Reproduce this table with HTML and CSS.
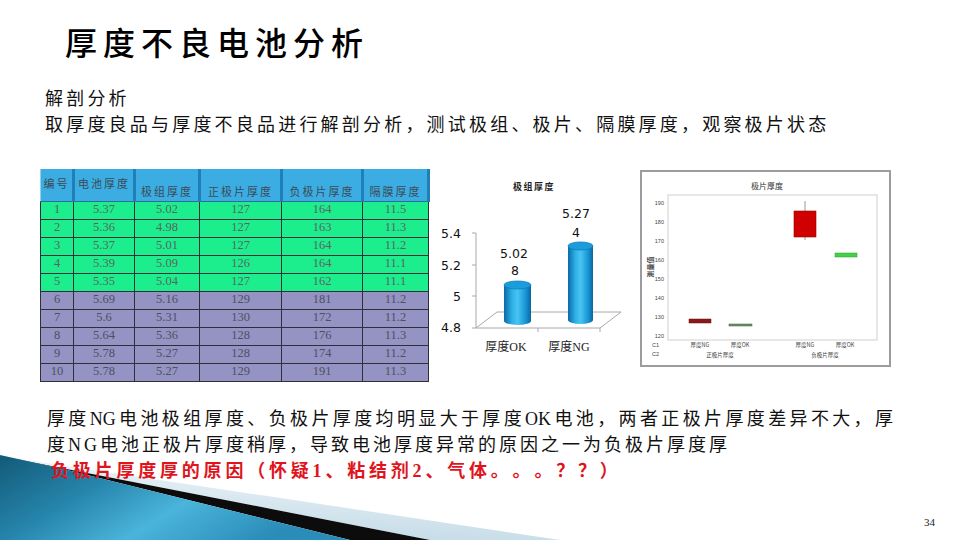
FILE: index.html
```html
<!DOCTYPE html>
<html lang="zh-CN">
<head>
<meta charset="utf-8">
<title>厚度不良电池分析</title>
<link rel="stylesheet" href="styles.css">
</head>
<body>
<div class="slide">
  <svg class="deco" viewBox="0 0 560 100" width="560" height="100">
    <defs>
      <linearGradient id="teal" x1="0" y1="0" x2="1" y2="0.4">
        <stop offset="0" stop-color="#125a78"/>
        <stop offset="0.35" stop-color="#2684ab"/>
        <stop offset="0.65" stop-color="#4ab4da"/>
        <stop offset="1" stop-color="#2a8cb8"/>
      </linearGradient>
      <linearGradient id="pale" x1="0" y1="1" x2="0.3" y2="0">
        <stop offset="0" stop-color="#bcd6e4"/>
        <stop offset="1" stop-color="#eef5f9"/>
      </linearGradient>
    </defs>
    <polygon points="0,16 560,100 430,100" fill="url(#pale)"/>
    <polygon points="0,16 430,100 350,100 63,29" fill="#0c0c0c"/>
    <polygon points="0,15 63,29 350,100 0,100" fill="url(#teal)"/>
  </svg>

  <div class="content">
    <h1 class="title">厚度不良电池分析</h1>

    <div class="intro">
      <p>解剖分析</p>
      <p>取厚度良品与厚度不良品进行解剖分析，测试极组、极片、隔膜厚度，观察极片状态</p>
    </div>

    <div class="figures">
      <table class="data">
        <colgroup>
          <col class="c1"><col class="c2"><col class="c3"><col class="c4"><col class="c5"><col class="c6">
        </colgroup>
        <thead>
          <tr>
            <th class="mid">编号</th>
            <th class="mid">电池厚度</th>
            <th>极组厚度</th>
            <th>正极片厚度</th>
            <th>负极片厚度</th>
            <th>隔膜厚度</th>
          </tr>
        </thead>
        <tbody>
          <tr class="ok"><td>1</td><td>5.37</td><td>5.02</td><td>127</td><td>164</td><td>11.5</td></tr>
          <tr class="ok"><td>2</td><td>5.36</td><td>4.98</td><td>127</td><td>163</td><td>11.3</td></tr>
          <tr class="ok"><td>3</td><td>5.37</td><td>5.01</td><td>127</td><td>164</td><td>11.2</td></tr>
          <tr class="ok"><td>4</td><td>5.39</td><td>5.09</td><td>126</td><td>164</td><td>11.1</td></tr>
          <tr class="ok"><td>5</td><td>5.35</td><td>5.04</td><td>127</td><td>162</td><td>11.1</td></tr>
          <tr class="ng"><td>6</td><td>5.69</td><td>5.16</td><td>129</td><td>181</td><td>11.2</td></tr>
          <tr class="ng"><td>7</td><td>5.6</td><td>5.31</td><td>130</td><td>172</td><td>11.2</td></tr>
          <tr class="ng"><td>8</td><td>5.64</td><td>5.36</td><td>128</td><td>176</td><td>11.3</td></tr>
          <tr class="ng"><td>9</td><td>5.78</td><td>5.27</td><td>128</td><td>174</td><td>11.2</td></tr>
          <tr class="ng"><td>10</td><td>5.78</td><td>5.27</td><td>129</td><td>191</td><td>11.3</td></tr>
        </tbody>
      </table>

      <svg class="bar-chart" viewBox="0 0 200 190" width="200" height="190">
        <defs>
          <linearGradient id="cyl" x1="0" y1="0" x2="1" y2="0">
            <stop offset="0" stop-color="#0a6aa6"/>
            <stop offset="0.3" stop-color="#2fb0e8"/>
            <stop offset="0.5" stop-color="#48c4f4"/>
            <stop offset="0.8" stop-color="#1896d4"/>
            <stop offset="1" stop-color="#0a64a0"/>
          </linearGradient>
        </defs>
        <text class="bc-title" x="102" y="20">极组厚度</text>
        <g class="bc-y">
          <text x="29" y="68">5.4</text>
          <text x="29" y="100">5.2</text>
          <text x="29" y="131">5</text>
          <text x="29" y="162">4.8</text>
        </g>
        <g class="bc-axis">
          <line x1="44" y1="63" x2="44" y2="158"/>
          <line x1="40" y1="63" x2="44" y2="63"/>
          <line x1="40" y1="95" x2="44" y2="95"/>
          <line x1="40" y1="126" x2="44" y2="126"/>
          <line x1="40" y1="158" x2="44" y2="158"/>
          <polygon points="44,158 168,158 189,142 65,142" fill="none"/>
          <line x1="106" y1="158" x2="106" y2="162"/>
          <line x1="168" y1="158" x2="168" y2="162"/>
        </g>
        <path d="M72,115 L72,151 A13.5,4 0 0 0 99,151 L99,115 Z" fill="url(#cyl)"/>
        <ellipse cx="85.5" cy="115" rx="13.5" ry="4" fill="#1b9ddb" stroke="#0d7cbd" stroke-width="0.8"/>
        <path d="M136,76 L136,150 A12.5,4 0 0 0 161,150 L161,76 Z" fill="url(#cyl)"/>
        <ellipse cx="148.5" cy="76" rx="12.5" ry="4" fill="#1b9ddb" stroke="#0d7cbd" stroke-width="0.8"/>
        <g class="bc-val">
          <text x="82" y="88">5.02</text>
          <text x="83" y="105">8</text>
          <text x="144" y="48">5.27</text>
          <text x="144" y="67">4</text>
        </g>
        <g class="bc-x">
          <text x="74" y="181">厚度OK</text>
          <text x="137" y="181">厚度NG</text>
        </g>
      </svg>

      <svg class="box-chart" viewBox="0 0 251 197" width="251" height="197">
        <rect x="1" y="1" width="249" height="195" fill="#fff" stroke="#9c9c9c" stroke-width="2"/>
        <rect x="28" y="25" width="209" height="145" fill="none" stroke="#cfcfcf" stroke-width="1"/>
        <text class="xc-title" x="127" y="19">极片厚度</text>
        <g class="xc-y">
          <text x="24" y="35">190</text>
          <text x="24" y="54">180</text>
          <text x="24" y="73">170</text>
          <text x="24" y="92">160</text>
          <text x="24" y="111">150</text>
          <text x="24" y="130">140</text>
          <text x="24" y="149">130</text>
          <text x="24" y="168">120</text>
        </g>
        <text class="xc-ytitle" x="0" y="0" transform="translate(13,97) rotate(-90)">测量值</text>
        <line x1="165" y1="31" x2="165" y2="41" stroke="#555" stroke-width="0.6"/>
        <line x1="165" y1="67" x2="165" y2="70" stroke="#555" stroke-width="0.6"/>
        <rect x="49" y="149" width="22" height="4" fill="#8a1818" stroke="#6a1010" stroke-width="0.5"/>
        <rect x="89" y="154" width="23" height="2" fill="#6f8f6f" stroke="#3f5f3f" stroke-width="0.5"/>
        <rect x="154" y="41" width="22" height="26" fill="#d10000" stroke="#9a0000" stroke-width="0.6"/>
        <rect x="195" y="83" width="22" height="4" fill="#45d045" stroke="#2a9a2a" stroke-width="0.5"/>
        <g class="xc-cat">
          <text x="12" y="177" class="start">C1</text>
          <text x="12" y="186" class="start">C2</text>
          <text x="60" y="177">厚度NG</text>
          <text x="100" y="177">厚度OK</text>
          <text x="165" y="177">厚度NG</text>
          <text x="205" y="177">厚度OK</text>
          <text x="80" y="187">正极片厚度</text>
          <text x="185" y="187">负极片厚度</text>
        </g>
      </svg>
    </div>

    <div class="conclusion">
      <p class="spread">厚度NG电池极组厚度、负极片厚度均明显大于厚度OK电池，两者正极片厚度差异不大，厚</p>
      <p>度NG电池正极片厚度稍厚，导致电池厚度异常的原因之一为负极片厚度厚</p>
      <p class="cause">负极片厚度厚的原因（怀疑1、粘结剂2、气体。。。？？）</p>
    </div>

    <div class="page-num">34</div>
  </div>
</div>
</body>
</html>
```

FILE: styles.css
```css
body {
  margin: 0;
  background: #fff;
}

.slide {
  position: relative;
  width: 960px;
  height: 540px;
  overflow: hidden;
  background: #fff;
  font-family: "Liberation Serif", "Noto Sans CJK SC", serif;
  color: #111;
  text-spacing-trim: space-all;
}

.deco {
  position: absolute;
  left: 0;
  bottom: 0;
  z-index: 0;
  display: block;
}

.content {
  position: relative;
  z-index: 1;
  height: 540px;
  box-sizing: border-box;
  padding-top: 21px;
  display: flex;
  flex-direction: column;
}

.title {
  margin: 0 0 0 65px;
  font-family: "Noto Sans CJK SC", sans-serif;
  font-size: 32px;
  line-height: 40px;
  font-weight: 500;
  letter-spacing: 6px;
  color: #000;
}

.intro {
  margin: 25px 0 0 45px;
  font-size: 18px;
  line-height: 26px;
  letter-spacing: 3.2px;
}

.intro p {
  margin: 0;
}

.figures {
  display: flex;
  align-items: flex-start;
  margin: 31px 0 0 40px;
}

/* data table */
.data {
  border-collapse: collapse;
  table-layout: fixed;
  width: 388px;
  flex: none;
}

.data .c1 { width: 33px; }
.data .c2 { width: 61px; }
.data .c3 { width: 65px; }
.data .c4 { width: 82px; }
.data .c5 { width: 81px; }
.data .c6 { width: 66px; }

.data th {
  height: 32px;
  padding: 0 0 2px;
  box-sizing: border-box;
  background: #3badE2;
  border-right: 3px solid #1f7fb6;
  border-left: 1px solid #8fd2f0;
  border-bottom: 1px solid #2a6f95;
  font-family: "Noto Sans CJK SC", sans-serif;
  font-weight: 400;
  font-size: 11px;
  letter-spacing: 2px;
  color: #3d4a55;
  vertical-align: bottom;
  white-space: nowrap;
}

.data th.mid {
  vertical-align: middle;
  padding: 0 0 4px;
}

.data td {
  height: 18px;
  padding: 0;
  box-sizing: border-box;
  border: 1px solid #2f2f3a;
  text-align: center;
  vertical-align: top;
  font-size: 12.5px;
  line-height: 15px;
  color: #5c6462;
}

.data tr.ok td {
  background: #1cee8e;
}

.data tr.ng td {
  background: #9493c4;
  color: #4f5060;
}

/* bar chart */
.bar-chart {
  flex: none;
  display: block;
  margin: 1px 0 0 2px;
}

.bc-title {
  font-family: "Noto Sans CJK SC", sans-serif;
  font-size: 9px;
  font-weight: 700;
  letter-spacing: 1.5px;
  text-anchor: middle;
  fill: #222;
}

.bc-y text {
  font-family: "DejaVu Sans", sans-serif;
  font-size: 12.5px;
  text-anchor: end;
  fill: #111;
}

.bc-axis line,
.bc-axis polygon {
  stroke: #a8a8a8;
  stroke-width: 1;
}

.bc-val text {
  font-family: "DejaVu Sans", sans-serif;
  font-size: 12.5px;
  text-anchor: middle;
  fill: #111;
}

.bc-x text {
  font-family: "Liberation Serif", "Noto Sans CJK SC", serif;
  font-size: 12px;
  text-anchor: middle;
  fill: #222;
}

/* box chart */
.box-chart {
  flex: none;
  display: block;
  margin: 1px 0 0 8px;
}

.xc-title {
  font-family: "Noto Sans CJK SC", sans-serif;
  font-size: 8px;
  text-anchor: middle;
  fill: #333;
}

.xc-y text {
  font-family: "Liberation Sans", sans-serif;
  font-size: 5.5px;
  text-anchor: end;
  fill: #444;
}

.xc-ytitle {
  font-family: "Noto Sans CJK SC", sans-serif;
  font-size: 7px;
  font-weight: 700;
  text-anchor: middle;
  fill: #444;
}

.xc-cat text {
  font-family: "Noto Sans CJK SC", sans-serif;
  font-size: 5.5px;
  text-anchor: middle;
  fill: #444;
}

.xc-cat text.start {
  font-family: "Liberation Sans", sans-serif;
  text-anchor: start;
}

/* conclusion text */
.conclusion {
  margin: 24px 0 0 47px;
  width: 846px;
  font-size: 18px;
  line-height: 26px;
  letter-spacing: 3px;
}

.conclusion p {
  margin: 0;
}

.conclusion .spread {
  text-align: justify;
  text-align-last: justify;
  letter-spacing: 0;
}

.conclusion .cause {
  margin-left: 4px;
  font-weight: 700;
  letter-spacing: 3.8px;
  color: #e0141c;
}

.page-num {
  margin-top: auto;
  padding: 0 25px 11px 0;
  text-align: right;
  font-size: 11px;
  line-height: 14px;
  color: #222;
}
```
